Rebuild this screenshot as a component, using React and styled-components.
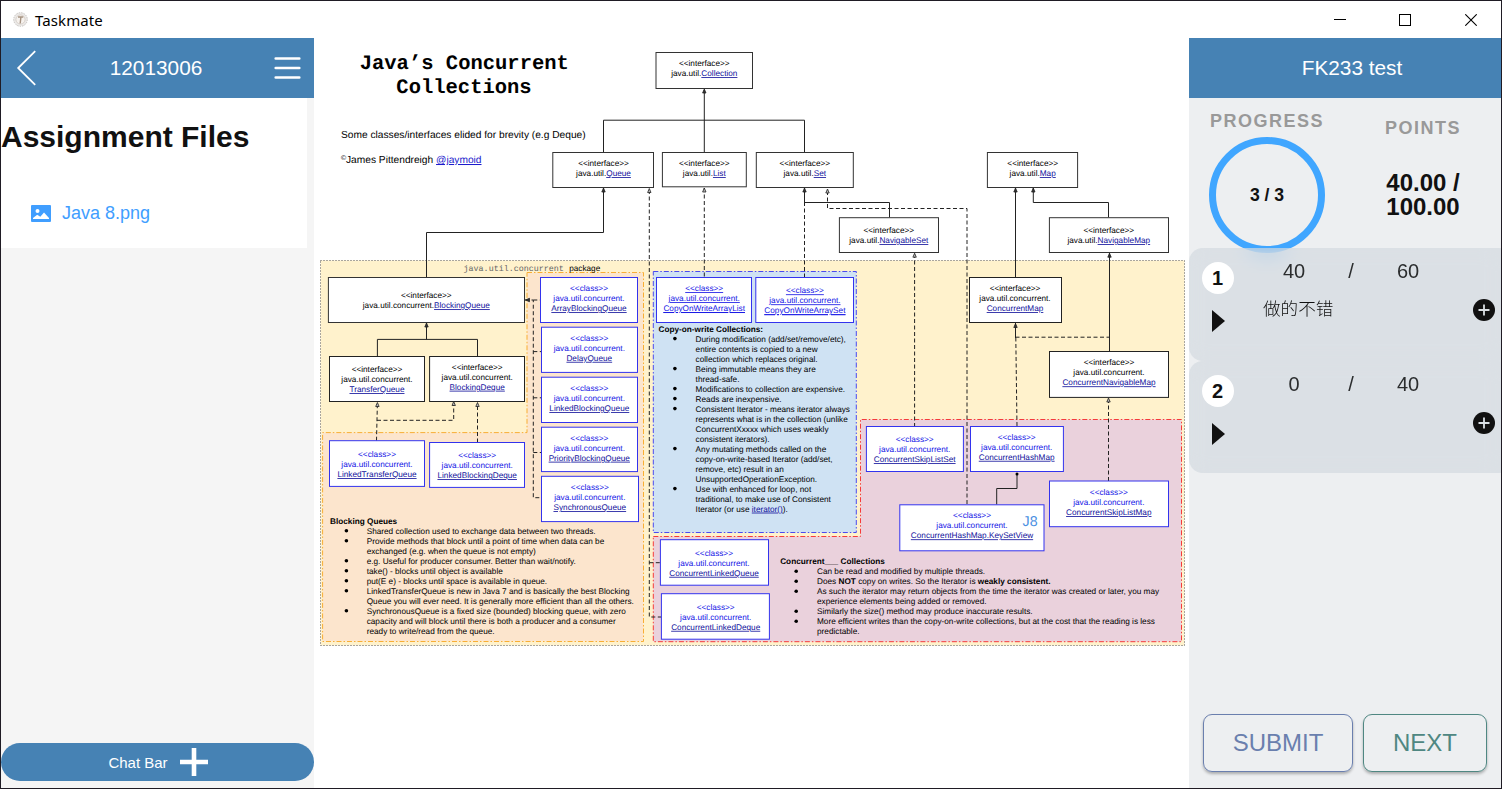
import React from "react";
import styled, { createGlobalStyle } from "styled-components";

const GlobalStyle = createGlobalStyle`
  * { box-sizing: border-box; }
  body { margin: 0; background: #fff; font-family: "Liberation Sans", Arial, sans-serif; color: #111; }
`;

const Window = styled.div`
  width: 100vw;
  height: 100vh;
  border: 1px solid #1f1b24;
  display: flex;
  flex-direction: column;
  overflow: hidden;
  background: #fff;
`;
const TitleBar = styled.header`
  height: 37px;
  flex: none;
  display: flex;
  align-items: center;
  padding-left: 12px;
  gap: 7px;
`;
const AppName = styled.span`
  flex: 1;
  font: 15px/20px "Noto Sans", "Open Sans", sans-serif;
  letter-spacing: 0.1px;
  color: #000;
`;
const WindowButton = styled.span`
  width: ${(p) => p.$width || 58}px;
  height: 36px;
  display: flex;
  align-items: center;
  justify-content: center;
`;
const Body = styled.div`
  flex: 1;
  min-height: 0;
  display: flex;
`;

const Sidebar = styled.aside`
  width: 313px;
  flex: none;
  background: #f5f5f5;
  display: flex;
  flex-direction: column;
`;
const PanelHeader = styled.div`
  height: 60px;
  flex: none;
  background: #4682b4;
  color: #fff;
  font-size: 20.8px;
  display: flex;
  align-items: center;
  justify-content: ${(p) => (p.$centered ? "center" : "space-between")};
  padding: 0 13px 0 15px;
`;
const FilesCard = styled.section`
  width: 306px;
  height: 150px;
  background: #fff;
`;
const FilesTitle = styled.h1`
  margin: 0;
  padding-top: 22px;
  font-size: 30px;
  line-height: 34px;
  font-weight: 700;
`;
const FileRow = styled.a`
  display: flex;
  align-items: center;
  gap: 11px;
  margin: 49px 0 0 30px;
  height: 20px;
  color: #409eff;
  font-size: 18px;
`;
const Spacer = styled.div`
  flex: 1;
`;
const ChatBar = styled.button`
  height: 38px;
  margin: 0 0 7px;
  padding: 0 0 0 1px;
  border: 0;
  border-radius: 19px;
  background: #4682b4;
  color: #fff;
  font: 15px "Liberation Sans", Arial, sans-serif;
  display: flex;
  align-items: center;
  justify-content: center;
  gap: 12px;
`;

const Viewer = styled.main`
  width: 875px;
  flex: none;
  background: #fff;
`;

const GradePanel = styled.aside`
  flex: 1;
  background: #edeff1;
  display: flex;
  flex-direction: column;
`;
const Summary = styled.section`
  height: 150px;
  flex: none;
  display: flex;
`;
const Stat = styled.div`
  width: 156px;
  display: flex;
  flex-direction: column;
  align-items: center;
  padding-top: ${(p) => p.$top}px;
`;
const StatLabel = styled.div`
  font-size: 18px;
  line-height: 20px;
  font-weight: 700;
  letter-spacing: 1.5px;
  color: #999;
`;
const Ring = styled.div`
  width: 116px;
  height: 116px;
  flex: none;
  margin-top: 6px;
  border: 7px solid #40a6ff;
  border-radius: 50%;
  display: flex;
  align-items: center;
  justify-content: center;
  font-size: 17.6px;
  font-weight: 700;
`;
const Points = styled.div`
  width: 80px;
  margin-top: 33px;
  font-size: 24px;
  line-height: 24px;
  font-weight: 700;
  text-align: center;
`;
const Task = styled.article`
  height: ${(p) => p.$height}px;
  flex: none;
  border-radius: 14px;
  background: rgba(201, 210, 217, 0.5);
  backdrop-filter: blur(10px);
  display: grid;
  grid-template-columns: 57px 1fr 57px;
`;
const TaskMark = styled.div`
  display: flex;
  flex-direction: column;
  align-items: center;
  padding-top: 14px;
  gap: 16px;
`;
const Badge = styled.span`
  width: 32px;
  height: 32px;
  border-radius: 50%;
  background: #fff;
  font-size: 20px;
  line-height: 32px;
  font-weight: 700;
  text-align: center;
`;
const Score = styled.div`
  display: grid;
  grid-template-columns: 96px 18px 96px;
  justify-content: center;
  padding-top: 12px;
  font-size: 20px;
  line-height: 23px;
  text-align: center;
  color: #2b2d2e;
`;
const Comment = styled.p`
  margin: 13px 0 0 17px;
  font: 300 17.6px/24px "Noto Sans CJK SC", sans-serif;
  color: #111;
`;
const AddCell = styled.div`
  padding: 51px 0 0 17px;
`;
const Actions = styled.footer`
  display: flex;
  gap: 10px;
  padding: 0 14px 16px;
`;
const ActionButton = styled.button`
  width: ${(p) => p.$width}px;
  height: 58px;
  border: 1px solid ${(p) => p.$color};
  border-radius: 9px;
  background: transparent;
  color: ${(p) => p.$color};
  font: 24px "Liberation Sans", Arial, sans-serif;
  padding: 0;
  box-shadow: 0 2px 3px rgba(0, 0, 0, 0.28);
`;

const Drawing = styled.svg`
  display: block;
  font-family: "Liberation Sans", Arial, sans-serif;
  font-size: 8.22px;
  text-rendering: geometricPrecision;
`;
const Link = styled.tspan`
  fill: ${(p) => p.$color || "#12129c"};
  text-decoration: underline;
`;
const Wire = styled.path`
  fill: none;
  stroke: #222;
  stroke-width: 1;
  stroke-dasharray: ${(p) => (p.$dashed ? "4 2.5" : "none")};
`;

/* x1, y1, x2, y2, text centre, first baseline, owner package, type name */
const interfaces = [
  [656, 52.5, 752.5, 88.5, 704.3, 66.2, "java.util.", "Collection"],
  [552.8, 152.5, 653.5, 187.5, 603.5, 166, "java.util.", "Queue"],
  [662.4, 152.5, 746.3, 186.8, 704.3, 166, "java.util.", "List"],
  [756.3, 152.5, 853.3, 187.5, 804.8, 166, "java.util.", "Set"],
  [839.4, 217.7, 938.5, 252.5, 888.8, 233, "java.util.", "NavigableSet"],
  [987.4, 152.5, 1077.6, 187.5, 1032.7, 166, "java.util.", "Map"],
  [1049.4, 217.7, 1168.5, 252.5, 1108.8, 233, "java.util.", "NavigableMap"],
  [328.4, 277.5, 524.5, 322.5, 426.3, 298.2, "java.util.concurrent.", "BlockingQueue"],
];
const concurrentTypes = [
  ["interface", 969.5, 277.5, 1061.5, 322.5, 1015, 291, "ConcurrentMap"],
  ["interface", 1049.5, 351.5, 1168.5, 397.4, 1109, 365.3, "ConcurrentNavigableMap"],
  ["interface", 329.5, 356.5, 424.5, 401.5, 377, 372, "TransferQueue"],
  ["interface", 429.6, 356.5, 524.5, 401.5, 477.2, 369.7, "BlockingDeque"],
  ["class", 329.5, 440.7, 424.5, 486.4, 377, 457, "LinkedTransferQueue"],
  ["class", 429.6, 442.5, 524.5, 487.4, 477.2, 458.2, "LinkedBlockingDeque"],
  ["class", 540.5, 277.5, 637.5, 322.5, 589, 291.2, "ArrayBlockingQueue"],
  ["class", 541.5, 327.2, 637.5, 372.4, 589.3, 340.8, "DelayQueue"],
  ["class", 541.5, 377.2, 637.5, 422.5, 589.3, 391, "LinkedBlockingQueue"],
  ["class", 541.5, 427.2, 637.5, 471.6, 589.3, 440.7, "PriorityBlockingQueue"],
  ["class", 541.5, 476.3, 638.5, 521.6, 589.8, 490.2, "SynchronousQueue"],
  ["underlined", 656.5, 277.5, 751.5, 322.5, 704.2, 291.2, "CopyOnWriteArrayList"],
  ["underlined", 755.8, 277.5, 853.5, 322.5, 804.9, 293.3, "CopyOnWriteArraySet"],
  ["class", 866.4, 426.5, 963.4, 471.5, 914.7, 442.2, "ConcurrentSkipListSet"],
  ["class", 970.5, 426.5, 1063.4, 471.5, 1016.7, 439.8, "ConcurrentHashMap"],
  ["class", 1049.5, 481, 1168.5, 526.7, 1108.8, 495, "ConcurrentSkipListMap"],
  ["class", 899.8, 504.8, 1044, 550.8, 972, 518.3, "ConcurrentHashMap.KeySetView"],
  ["class", 660.4, 539.7, 768.5, 585.2, 714, 555.8, "ConcurrentLinkedQueue"],
  ["class", 661.4, 593.7, 769.4, 639.2, 715.7, 609.8, "ConcurrentLinkedDeque"],
];

const solidWires = [
  "M704.3 152.5V90M603.5 152.5V120.2H804.5V152.5",
  "M426.5 277.5V232.5H603.5V188",
  "M889.5 217.5V202.5H804.5V188",
  "M1015.5 277.5V188M1108.5 217.5V202.5H1033.3V188",
  "M1109.5 351.5V253",
  "M377.4 356.5V339.4H477.5V356.5M426.5 339.4V323",
  "M1015.5 338V323",
  "M996.7 504.5V488.5H1017V474",
];
const dashedWires = [
  "M649.3 190V617H661.5M649.3 562.7H660.5",
  "M704.3 188V277.5",
  "M804.5 202V277.5",
  "M827.5 191V208.5H967V504.5",
  "M914.6 254V426.5",
  "M1015.5 337.2H1109M1015.8 337.5L1017 426.5",
  "M1108.5 399V481",
  "M376.5 440.7L377.4 403M377 420.3H453.7V403",
  "M477.5 442.5V403",
  "M525 300H533.3V497.7H541.5M533.3 300H540.5M533.3 351.6H541.5M533.3 397.8H541.5M533.3 452.5H541.5",
];
const arrows = [
  [704.3, 89], [603.5, 188], [649.3, 188.5, 1], [704.3, 188, 1], [804.5, 188],
  [827.5, 189, 1], [1015.5, 188], [1033.3, 188], [914.6, 253.2, 1], [1109.5, 253.2],
  [426.5, 323], [377.4, 402.5, 1], [453.7, 401.5, 1], [477.5, 402.5, 1],
  [1015.5, 323.5], [1108.5, 398, 1],
];

const notes = [
  {
    x: 330, y: 523.7, title: "Blocking Queues", bulletX: 346.4, textX: 366.7,
    items: [
      ["Shared collection used to exchange data between two threads."],
      ["Provide methods that block until a point of time when data can be", "exchanged (e.g. when the queue is not empty)"],
      ["e.g. Useful for producer consumer. Better than wait/notify."],
      ["take() - blocks until object is available"],
      ["put(E e) - blocks until space is available in queue."],
      ["LinkedTransferQueue is new in Java 7 and is basically the best Blocking", "Queue you will ever need. It is generally more efficient than all the others."],
      ["SynchronousQueue is a fixed size (bounded) blocking queue, with zero", "capacity and will block until there is both a producer and a consumer", "ready to write/read from the queue."],
    ],
  },
  {
    x: 658.5, y: 331.6, title: "Copy-on-write Collections:", bulletX: 674.9, textX: 695.6,
    items: [
      ["During modification (add/set/remove/etc),", "entire contents is copied to a new", "collection which replaces original."],
      ["Being immutable means they are", "thread-safe."],
      ["Modifications to collection are expensive."],
      ["Reads are inexpensive."],
      ["Consistent Iterator - means iterator always", "represents what is in the collection (unlike", "ConcurrentXxxxx which uses weakly", "consistent iterators)."],
      ["Any mutating methods called on the", "copy-on-write-based Iterator (add/set,", "remove, etc) result in an", "UnsupportedOperationException."],
      ["Use with enhanced for loop, not", "traditional, to make use of Consistent", <>Iterator (or use <Link>iterator()</Link>).</>],
    ],
  },
  {
    x: 780.2, y: 564.3, title: "Concurrent___ Collections", bulletX: 796.2, textX: 817,
    items: [
      ["Can be read and modified by multiple threads."],
      [<>Does <tspan fontWeight="700">NOT</tspan> copy on writes. So the Iterator is <tspan fontWeight="700">weakly consistent.</tspan></>],
      ["As such the iterator may return objects from the time the iterator was created or later, you may", "experience elements being added or removed."],
      ["Similarly the size() method may produce inaccurate results."],
      ["More efficient writes than the copy-on-write collections, but at the cost that the reading is less", "predictable."],
    ],
  },
];

function InterfaceNode({ data }) {
  const [x1, y1, x2, y2, cx, y, pkg, name] = data;
  return (
    <g textAnchor="middle">
      <rect x={x1} y={y1} width={x2 - x1} height={y2 - y1} fill="#fff" stroke="#333" />
      <text x={cx} y={y}>{"<<interface>>"}</text>
      <text x={cx} y={y + 10}>{pkg}<Link>{name}</Link></text>
    </g>
  );
}

function ConcurrentNode({ data }) {
  const [kind, x1, y1, x2, y2, cx, y, name] = data;
  const isInterface = kind === "interface";
  const all = kind === "underlined";
  return (
    <g textAnchor="middle" fill={isInterface ? "#000" : "#1414e6"} textDecoration={all ? "underline" : undefined}>
      <rect x={x1} y={y1} width={x2 - x1} height={y2 - y1} fill="#fff" stroke={isInterface ? "#222" : "#3333ee"} />
      <text x={cx} y={y}>{isInterface ? "<<interface>>" : "<<class>>"}</text>
      <text x={cx} y={y + 10}>java.util.concurrent.</text>
      <text x={cx} y={y + 20}><Link $color={all ? "#1414e6" : undefined}>{name}</Link></text>
    </g>
  );
}

function Note({ note }) {
  let line = 0;
  return (
    <g>
      <text x={note.x} y={note.y} fontWeight="700">{note.title}</text>
      {note.items.map((lines, i) => {
        const first = note.y + 10 * (line + 1);
        line += lines.length;
        return (
          <g key={i}>
            <circle cx={note.bulletX} cy={first - 3} r="1.8" />
            {lines.map((text, j) => (
              <text key={j} x={note.textX} y={first + j * 10}>{text}</text>
            ))}
          </g>
        );
      })}
    </g>
  );
}

function CollectionsDiagram() {
  return (
    <Drawing width="875" height="750" viewBox="314 38 875 750">
      <g fontFamily="'Liberation Mono', monospace" fontSize="20.5" fontWeight="700" textAnchor="middle">
        <text x="464.3" y="69">Java’s Concurrent</text>
        <text x="464" y="93.4">Collections</text>
      </g>
      <g fontSize="10.2">
        <text x="341" y="138.2">Some classes/interfaces elided for brevity (e.g Deque)</text>
        <text x="341" y="159.5" fontSize="7">©</text>
        <text x="346" y="163">James Pittendreigh <Link $color="#1c1ccc">@jaymoid</Link></text>
      </g>

      <rect x="320.5" y="260.5" width="864" height="385" fill="#fff2cc" stroke="#555" strokeDasharray="1 2" />
      <path d="M527 272.5H643.5V641.5H322.6V432.6H527Z" fill="#fce5cd" stroke="#f8ae35" strokeDasharray="5 2 1.5 2" />
      <rect x="653.3" y="271.5" width="203" height="261" fill="#cfe2f3" stroke="#4a4af0" strokeDasharray="5 2 1.5 2" />
      <path d="M653.3 536.5H860.5V419.5H1181.5V641.7H653.3Z" fill="#ead1dc" stroke="#f53b3b" strokeDasharray="5 2 1.5 2" />
      <text x="463.6" y="270.6" fontFamily="'Liberation Mono', monospace" fontSize="8.35" fill="#666">java.util.concurrent</text>
      <text x="569.2" y="270.6">package</text>

      {solidWires.map((d) => <Wire key={d} d={d} />)}
      {dashedWires.map((d) => <Wire key={d} d={d} $dashed />)}
      {interfaces.map((n) => <InterfaceNode key={n[7]} data={n} />)}
      {concurrentTypes.map((n) => <ConcurrentNode key={n[7]} data={n} />)}
      {arrows.map(([x, y, open]) => (
        <path key={`${x}-${y}`} d={`M${x} ${y}l1.7 4h-3.4z`} fill={open ? "#bbb" : "#333"} stroke="#222" strokeWidth="0.8" />
      ))}
      <path d="M525.5 300l4-1.7v3.4z" fill="#333" stroke="#222" strokeWidth="0.8" />
      <circle cx="1017" cy="474" r="1.5" />
      <text x="1022.6" y="526" fontSize="14.2" fill="#4a90e2">J8</text>
      {notes.map((n) => <Note key={n.title} note={n} />)}
    </Drawing>
  );
}

function TaskItem({ number, score, total, comment, height }) {
  return (
    <Task $height={height}>
      <TaskMark>
        <Badge>{number}</Badge>
        <svg width="14" height="22" viewBox="0 0 14 22"><path d="M1 0L14 11L1 22Z" fill="#111" /></svg>
      </TaskMark>
      <div>
        <Score><span>{score}</span><span>/</span><span>{total}</span></Score>
        {comment && <Comment>{comment}</Comment>}
      </div>
      <AddCell>
        <svg width="22" height="22" viewBox="0 0 22 22" style={{ display: "block" }}>
          <circle cx="11" cy="11" r="11" fill="#111" />
          <path d="M11 5.5V16.5M5.5 11H16.5" stroke="#dbe0e4" strokeWidth="1.8" />
        </svg>
      </AddCell>
    </Task>
  );
}

export default function App() {
  return (
    <>
      <GlobalStyle />
      <Window>
        <TitleBar>
          <svg width="15" height="15" viewBox="0 0 15 15">
            <circle cx="7.5" cy="7.5" r="6.8" fill="#eceae8" stroke="#c4c0bd" strokeDasharray="1.5 1" />
            <circle cx="7.5" cy="7.5" r="4.6" fill="#f6f2ee" stroke="#cfc8c2" strokeWidth="0.8" />
            <path d="M5 5H10.3M7.9 5L7.2 11.5" stroke="#a59281" strokeWidth="1.4" />
          </svg>
          <AppName>Taskmate</AppName>
          <WindowButton>
            <svg width="12" height="12"><path d="M0 5.5H12" stroke="#000" /></svg>
          </WindowButton>
          <WindowButton>
            <svg width="12" height="12"><rect x="0.5" y="0.5" width="11" height="11" fill="none" stroke="#000" /></svg>
          </WindowButton>
          <WindowButton $width={60}>
            <svg width="12" height="12"><path d="M0.3 0.3L11.7 11.7M11.7 0.3L0.3 11.7" stroke="#000" strokeWidth="1.1" /></svg>
          </WindowButton>
        </TitleBar>
        <Body>
          <Sidebar>
            <PanelHeader>
              <svg width="22" height="36" viewBox="0 0 22 36">
                <path d="M19.2 1.2L2.2 18L19.2 34.8" fill="none" stroke="#fff" strokeWidth="1.8" />
              </svg>
              <span>12013006</span>
              <svg width="27" height="22" viewBox="0 0 27 22">
                <path d="M1.7 1.5H25.3M1.7 11H25.3M1.7 20.5H25.3" stroke="#fff" strokeWidth="2.6" strokeLinecap="round" />
              </svg>
            </PanelHeader>
            <FilesCard>
              <FilesTitle>Assignment Files</FilesTitle>
              <FileRow>
                <svg width="20" height="17" viewBox="0 0 20 17">
                  <path fillRule="evenodd" fill="#409eff" d="M1 0H19Q20 0 20 1V16Q20 17 19 17H1Q0 17 0 16V1Q0 0 1 0ZM2 14H18V13L13 7.5L9.3 11.7L6.2 9.8L2 13ZM6.5 4A2 2 0 1 0 6.5 8A2 2 0 1 0 6.5 4Z" />
                </svg>
                <span>Java 8.png</span>
              </FileRow>
            </FilesCard>
            <Spacer />
            <ChatBar>
              <span>Chat Bar</span>
              <svg width="28" height="28" viewBox="0 0 28 28">
                <path d="M14 0V28M0 14H28" stroke="#fff" strokeWidth="4.6" />
              </svg>
            </ChatBar>
          </Sidebar>
          <Viewer>
            <CollectionsDiagram />
          </Viewer>
          <GradePanel>
            <PanelHeader $centered>FK233 test</PanelHeader>
            <Summary>
              <Stat $top={13}>
                <StatLabel>PROGRESS</StatLabel>
                <Ring>3 / 3</Ring>
              </Stat>
              <Stat $top={20}>
                <StatLabel>POINTS</StatLabel>
                <Points>40.00 / 100.00</Points>
              </Stat>
            </Summary>
            <TaskItem number="1" score="40" total="60" comment="做的不错" height={113} />
            <TaskItem number="2" score="0" total="40" height={112} />
            <Spacer />
            <Actions>
              <ActionButton $width={150} $color="#6a7fae">SUBMIT</ActionButton>
              <ActionButton $width={124} $color="#4f8782">NEXT</ActionButton>
            </Actions>
          </GradePanel>
        </Body>
      </Window>
    </>
  );
}
